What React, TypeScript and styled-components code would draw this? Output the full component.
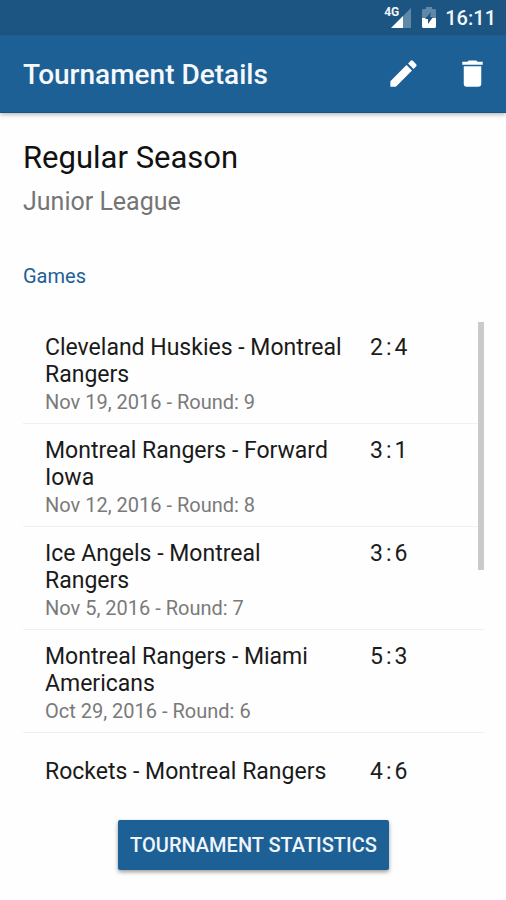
import React from "react";
import styled, { createGlobalStyle } from "styled-components";

const GlobalStyle = createGlobalStyle`
  *, *::before, *::after { box-sizing: border-box; }
  body { margin: 0; background: #fefefe; font-family: Roboto, sans-serif; color: #1c1c1c; }
  h1, h2, h3, p, ul { margin: 0; padding: 0; font-weight: 400; }
`;

const Screen = styled.div`
  display: flex;
  flex-direction: column;
  height: 100vh;
`;

const StatusBar = styled.div`
  display: flex;
  align-items: center;
  justify-content: flex-end;
  height: 35px;
  flex: none;
  padding: 0 10px;
  background: #1c5582;
  color: #f2f6fa;
`;

const Clock = styled.time`
  margin-left: 9px;
  font-size: 20px;
  line-height: 24px;
  font-weight: 500;
`;

const AppBar = styled.header`
  display: flex;
  align-items: center;
  height: 78px;
  flex: none;
  padding: 0 16px 0 23px;
  background: #1d6096;
  border-bottom: 1px solid #15538a;
  box-shadow: 0 2px 4px rgba(0, 0, 0, 0.25);
`;

const BarTitle = styled.h1`
  flex: 1;
  padding-top: 3px;
  color: #f6f9fc;
  font-size: 28px;
  line-height: 36px;
  font-weight: 500;
`;

const IconButton = styled.button`
  display: flex;
  padding: 0;
  margin-left: 34px;
  border: 0;
  background: none;
  color: #fff;
`;

const Body = styled.main`
  display: flex;
  flex-direction: column;
  flex: 1;
  min-height: 0;
  padding: 25px 22px 30px 23px;
`;

const Season = styled.h2`
  font-size: 31px;
  line-height: 40px;
  color: #111;
`;

const League = styled.p`
  margin-top: 6px;
  font-size: 25px;
  line-height: 36px;
  color: #757575;
`;

const SectionTitle = styled.h3`
  margin-top: 42px;
  font-size: 20px;
  line-height: 28px;
  color: #1d6096;
`;

const ListFrame = styled.div`
  position: relative;
  display: flex;
  flex: 1;
  min-height: 0;
  margin: 31px 0 32px;
  overflow: hidden;
`;

const GameList = styled.ul`
  flex: 1;
  list-style: none;
`;

const ScrollThumb = styled.div`
  position: absolute;
  top: 1px;
  right: 0;
  width: 6px;
  height: 53%;
  background: #cacaca;
`;

const GameRow = styled.li<{ $single?: boolean }>`
  display: flex;
  align-items: flex-start;
  padding: ${(p) => (p.$single ? "25px" : "13px")} 22px 9px;
  & + & { border-top: 1px solid #f0f0f0; }
`;

const GameInfo = styled.div`
  flex: 1;
  padding-right: 26px;
`;

const Teams = styled.p`
  font-size: 23px;
  line-height: 27px;
  color: #1a1a1a;
`;

const Meta = styled.p`
  font-size: 20px;
  line-height: 26px;
  padding-top: 1px;
  margin-bottom: -1px;
  color: #7a7a7a;
`;

const Score = styled.div`
  display: flex;
  gap: 3px;
  width: 92px;
  font-size: 23px;
  line-height: 27px;
`;

const StatsButton = styled.button`
  align-self: center;
  flex: none;
  padding: 11px 12px;
  border: 0;
  border-radius: 2px;
  background: #1d6096;
  color: #f0f5fb;
  font-family: inherit;
  font-size: 20px;
  line-height: 28px;
  font-weight: 500;
  text-transform: uppercase;
  box-shadow: 0 2px 4px rgba(0, 0, 0, 0.4);
`;

const NetworkLabel = styled.span`
  align-self: flex-start;
  margin: 6px -8px 0 0;
  font-family: "Liberation Sans Narrow", Roboto, sans-serif;
  font-size: 12px;
  line-height: 12px;
  font-weight: 700;
`;

interface Game {
  teams: string;
  meta?: string;
  home: number;
  away: number;
}

const games: Game[] = [
  { teams: "Cleveland Huskies - Montreal Rangers", meta: "Nov 19, 2016 - Round: 9", home: 2, away: 4 },
  { teams: "Montreal Rangers - Forward Iowa", meta: "Nov 12, 2016 - Round: 8", home: 3, away: 1 },
  { teams: "Ice Angels - Montreal Rangers", meta: "Nov 5, 2016 - Round: 7", home: 3, away: 6 },
  { teams: "Montreal Rangers - Miami Americans", meta: "Oct 29, 2016 - Round: 6", home: 5, away: 3 },
  { teams: "Rockets - Montreal Rangers", home: 4, away: 6 },
];

const SignalIcon = () => (
  <svg width="20" height="20" viewBox="0 0 20 20" aria-hidden="true">
    <path d="M12 8 20 0v20h-8z" fill="#fff" opacity=".3" />
    <path d="M0 20 12 8v12z" fill="#fff" />
  </svg>
);

const BatteryIcon = () => (
  <svg width="14" height="21" viewBox="0 0 14 21" aria-hidden="true">
    <path d="M1 2h3V0h6v2h3l1 1v8H0V3z" fill="#fff" opacity=".3" />
    <path d="M0 11h14v9l-1 1H1l-1-1z" fill="#fff" />
    <path d="M9 5 3 12h3v5l5-7H8z" fill="#1c5582" />
  </svg>
);

const PencilIcon = () => (
  <svg width="35" height="35" viewBox="0 0 24 24" fill="currentColor" aria-hidden="true">
    <path d="M3 17.25V21h3.75L17.81 9.94l-3.75-3.75L3 17.25zM20.71 7.04a1 1 0 0 0 0-1.41l-2.34-2.34a1 1 0 0 0-1.41 0l-1.83 1.83 3.75 3.75 1.83-1.83z" />
  </svg>
);

const TrashIcon = () => (
  <svg width="35" height="35" viewBox="0 0 24 24" fill="currentColor" aria-hidden="true">
    <path d="M6 19a2 2 0 0 0 2 2h8a2 2 0 0 0 2-2V7H6v12zM19 4h-3.5l-1-1h-5l-1 1H5v2h14V4z" />
  </svg>
);

const Gap = styled.span`
  width: 11px;
`;

export default function App() {
  return (
    <Screen>
      <GlobalStyle />
      <StatusBar>
        <NetworkLabel>4G</NetworkLabel>
        <SignalIcon />
        <Gap />
        <BatteryIcon />
        <Clock>16:11</Clock>
      </StatusBar>
      <AppBar>
        <BarTitle>Tournament Details</BarTitle>
        <IconButton aria-label="Edit tournament"><PencilIcon /></IconButton>
        <IconButton aria-label="Delete tournament"><TrashIcon /></IconButton>
      </AppBar>
      <Body>
        <Season>Regular Season</Season>
        <League>Junior League</League>
        <SectionTitle>Games</SectionTitle>
        <ListFrame>
          <GameList>
            {games.map((g) => (
              <GameRow key={g.teams} $single={!g.meta}>
                <GameInfo>
                  <Teams>{g.teams}</Teams>
                  {g.meta && <Meta>{g.meta}</Meta>}
                </GameInfo>
                <Score>
                  <span>{g.home}</span>
                  <span>:</span>
                  <span>{g.away}</span>
                </Score>
              </GameRow>
            ))}
          </GameList>
          <ScrollThumb />
        </ListFrame>
        <StatsButton>Tournament Statistics</StatsButton>
      </Body>
    </Screen>
  );
}
